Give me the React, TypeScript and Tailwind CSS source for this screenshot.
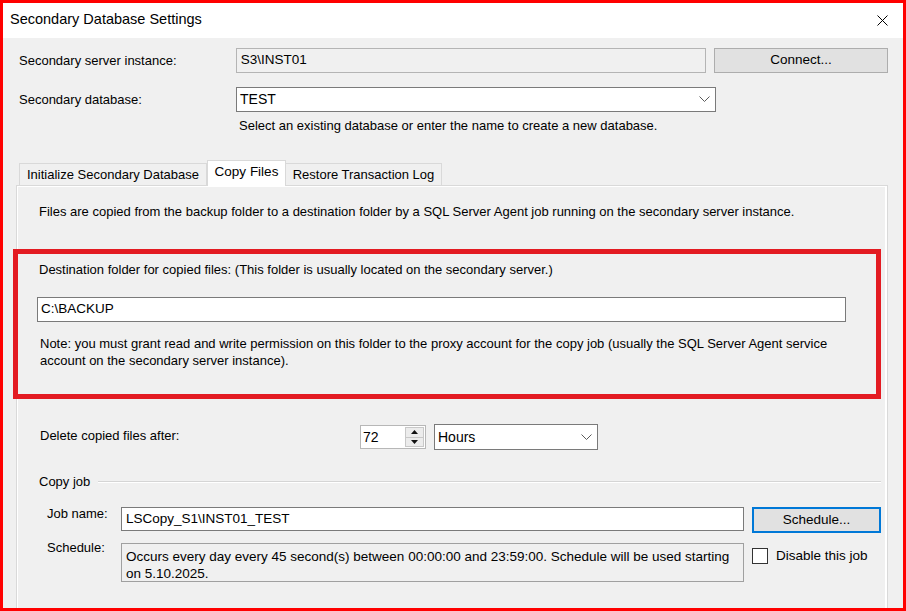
import React from 'react'

function Chevron() {
  return (
    <svg width="11" height="7" viewBox="0 0 11 7" className="shrink-0">
      <polyline points="0.5,0.5 5.5,5.5 10.5,0.5" fill="none" stroke="#5a5a5a" strokeWidth="1" />
    </svg>
  )
}

function CloseIcon() {
  return (
    <svg width="11" height="11" viewBox="0 0 11 11">
      <line x1="0.5" y1="0.5" x2="10.5" y2="10.5" stroke="#000" strokeWidth="1" />
      <line x1="10.5" y1="0.5" x2="0.5" y2="10.5" stroke="#000" strokeWidth="1" />
    </svg>
  )
}

function SpinBox() {
  return (
    <div className="flex h-[24px] w-[66px] border border-[#b7b7b7] bg-white">
      <div className="flex flex-1 items-center pl-[2px] text-[14px]">72</div>
      <div className="my-[1px] mr-[1px] flex w-[19px] flex-col border border-[#c8c8c8] bg-[#ececec]">
        <div className="flex flex-1 items-center justify-center border-b border-[#c8c8c8]">
          <svg width="7" height="4" viewBox="0 0 7 4"><polygon points="0,4 3.5,0 7,4" fill="#111" /></svg>
        </div>
        <div className="flex flex-1 items-center justify-center">
          <svg width="7" height="4" viewBox="0 0 7 4"><polygon points="0,0 7,0 3.5,4" fill="#111" /></svg>
        </div>
      </div>
    </div>
  )
}

export default function App() {
  return (
    <div className="h-[611px] w-[906px] overflow-hidden border-[3px] border-[#ff0000] bg-[#f0f0f0] font-['Liberation_Sans',Arial,sans-serif] text-[13px] text-black">
      {/* title bar */}
      <div className="flex h-[35px] items-center justify-between bg-white pb-[1px] pl-[7px] pr-[15px]">
        <span className="text-[14.5px]">Secondary Database Settings</span>
        <CloseIcon />
      </div>

      <div className="pl-[13px] pr-[15px]">
        {/* server instance */}
        <div className="mt-[10px] flex h-[25px] items-center pl-[3px]">
          <span className="w-[217px] pt-[1px]">Secondary server instance:</span>
          <div className="flex h-[25px] w-[471px] items-center border border-[#b4b4b4] bg-[#f0f0f0] pl-[4px] text-[13.5px]">
            S3\INST01
          </div>
          <button className="ml-[8px] h-[25px] w-[174px] border border-[#adadad] bg-[#e1e1e1] text-[13.5px]">
            Connect...
          </button>
        </div>

        {/* database */}
        <div className="mt-[14px] flex h-[25px] items-center pl-[3px]">
          <span className="w-[217px]">Secondary database:</span>
          <div className="flex h-[25px] w-[480px] items-center justify-between border border-[#7a7a7a] bg-white pl-[3px] pr-[5px] text-[14px]">
            <span>TEST</span>
            <Chevron />
          </div>
        </div>
        <div className="ml-[223px] mt-[6px] leading-[16px]">
          Select an existing database or enter the name to create a new database.
        </div>

        {/* tabs */}
        <div className="ml-[3px] mt-[27px] flex h-[24px] items-end">
          <div className="flex h-[22px] w-[188px] items-center justify-center border border-b-0 border-[#d9d9d9] bg-[#f0f0f0] text-[13px]">
            Initialize Secondary Database
          </div>
          <div className="relative z-10 -mb-px flex h-[26px] w-[79px] items-center justify-center border border-b-0 border-[#d9d9d9] bg-white pb-[3px] text-[13.5px]">
            Copy Files
          </div>
          <div className="flex h-[22px] w-[156px] items-center justify-center border border-b-0 border-l-0 border-[#d9d9d9] bg-[#f0f0f0] text-[13px]">
            Restore Transaction Log
          </div>
        </div>

        {/* tab page */}
        <div className="h-[440px] border border-[#d9d9d9] shadow-[inset_1px_1px_0_#ffffff,inset_-2px_0_0_#ffffff]">
          <div className="ml-[22px] pt-[18px] leading-[16px] whitespace-nowrap">
            Files are copied from the backup folder to a destination folder by a SQL Server Agent job running on the secondary server instance.
          </div>

          {/* highlighted destination block */}
          <div className="-ml-[4px] mt-[29px] h-[150px] w-[868px] border-[5px] border-[#e31b22]">
            <div className="ml-[21px] pt-[8px] leading-[16px]">
              Destination folder for copied files: (This folder is usually located on the secondary server.)
            </div>
            <div className="ml-[19px] mt-[19px] flex h-[25px] w-[809px] items-center border border-[#7a7a7a] bg-white pl-[3px] text-[13.5px]">
              C:\BACKUP
            </div>
            <div className="ml-[22px] mt-[14px] whitespace-nowrap leading-[16.5px]">
              Note: you must grant read and write permission on this folder to the proxy account for the copy job (usually the SQL Server Agent service
              <br />
              account on the secondary server instance).
            </div>
          </div>

          {/* delete after */}
          <div className="ml-[23px] mt-[25px] flex h-[26px] items-center">
            <span className="w-[320px] -mt-[3px]">Delete copied files after:</span>
            <SpinBox />
            <div className="ml-[8px] flex h-[26px] w-[164px] items-center justify-between border border-[#7a7a7a] bg-white pl-[3px] pr-[5px] text-[14px]">
              <span>Hours</span>
              <Chevron />
            </div>
          </div>

          {/* copy job group */}
          <div className="ml-[22px] mr-[6px] mt-[24px] flex items-center leading-[16px]">
            <span>Copy job</span>
            <div className="ml-[8px] flex-1 border-t border-b border-t-[#d5d5d5] border-b-white" />
          </div>

          <div className="ml-[30px] mt-[17px] flex items-start">
            <span className="-mt-[1px] w-[74px] leading-[16px]">Job name:</span>
            <div className="flex h-[24px] w-[623px] items-center border border-[#7a7a7a] bg-white pl-[4px] text-[13.5px]">
              LSCopy_S1\INST01_TEST
            </div>
            <button className="ml-[8px] h-[26px] w-[129px] border-2 border-[#0078d7] bg-[#e1e1e1] text-[13.5px]">
              Schedule...
            </button>
          </div>

          <div className="ml-[30px] mt-[10px] flex items-start">
            <span className="-mt-[3px] w-[74px] leading-[16px]">Schedule:</span>
            <div className="h-[39px] w-[623px] whitespace-nowrap border border-[#a0a0a0] bg-[#f0f0f0] pl-[4px] pt-[4px] text-[13.5px] leading-[17px]">
              Occurs every day every 45 second(s) between 00:00:00 and 23:59:00. Schedule will be used starting
              <br />
              on 5.10.2025.
            </div>
            <div className="ml-[8px] mt-[3px] flex items-center">
              <div className="h-[16px] w-[16px] border border-[#333333] bg-white" />
              <span className="ml-[8px] text-[13.5px]">Disable this job</span>
            </div>
          </div>
        </div>
      </div>
    </div>
  )
}
